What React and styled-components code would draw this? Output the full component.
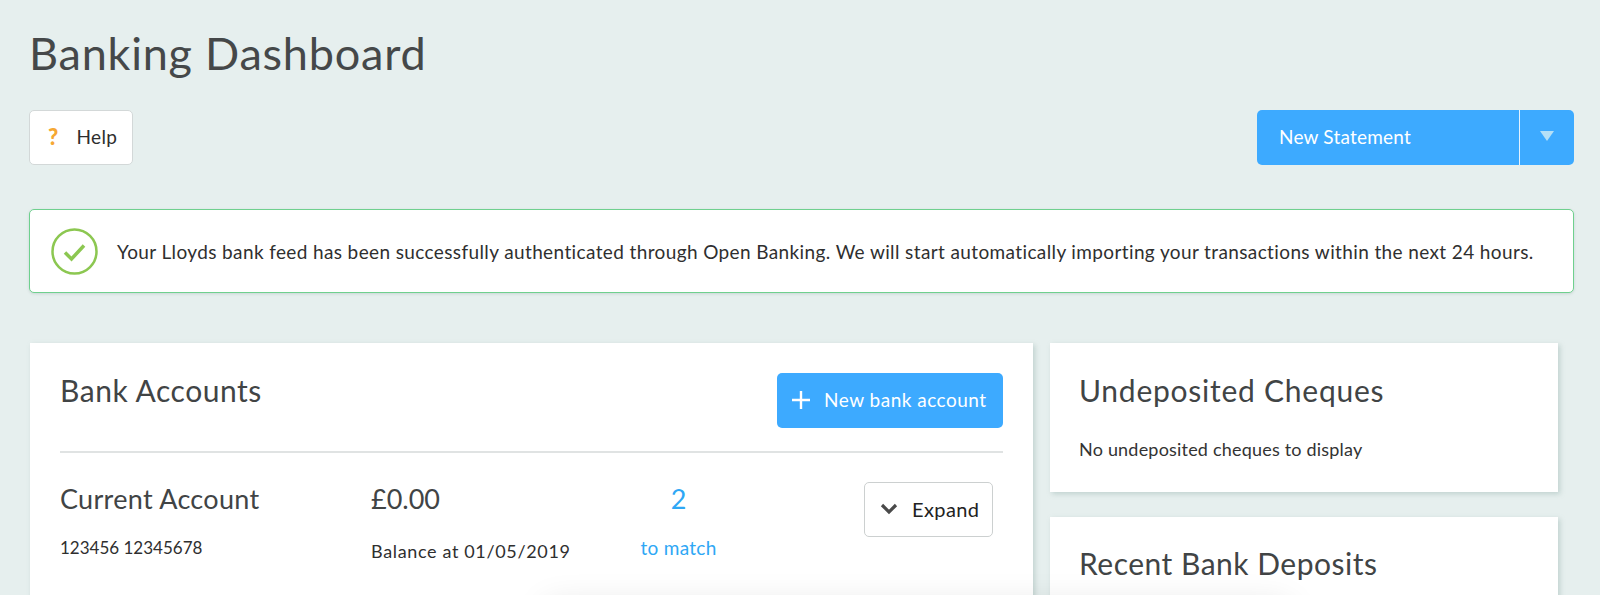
import React from "react";
import styled, { createGlobalStyle } from "styled-components";

const Global = createGlobalStyle`
  html, body { margin: 0; padding: 0; height: 595px; overflow: hidden; background: #e6efee; }
  body { font-family: Lato, "Open Sans", sans-serif; color: #333; }
  * { box-sizing: border-box; }
`;

const Page = styled.div`
  position: relative;
  height: 595px;
  overflow: hidden;
  padding: 24px 26px 0 30px;
  background: #e6efee;
`;

const Title = styled.h1`
  margin: 0;
  height: 58px;
  font-size: 45px;
  line-height: 58px;
  font-weight: 400;
  letter-spacing: 0.77px;
  margin-left: -1px;
  color: #454849;
`;

const Toolbar = styled.div`
  display: flex;
  justify-content: space-between;
  margin-top: 28px;
`;

const HelpButton = styled.button`
  display: flex;
  align-items: center;
  gap: 18px;
  width: 104px;
  height: 55px;
  padding: 0 0 2px 18px;
  margin-left: -1px;
  border: 1px solid #d3d8d8;
  border-radius: 5px;
  background: #fff;
  font: 400 19px Lato, sans-serif;
  letter-spacing: 0.3px;
  color: #2d2d2d;
`;

const HelpMark = styled.span`
  font: 900 22px Lato, sans-serif;
  color: #f6a834;
`;

const SplitButton = styled.div`
  display: flex;
  width: 317px;
  height: 55px;
  border-radius: 5px;
  background: #3daaff;
  color: #fff;
  overflow: hidden;
`;

const SplitLabel = styled.div`
  flex: 1;
  padding-left: 22px;
  font-size: 19px;
  letter-spacing: 0.2px;
  line-height: 53px;
`;

const SplitCaret = styled.div`
  display: flex;
  justify-content: center;
  width: 55px;
  padding-top: 20px;
  border-left: 1px solid #e3f2ff;
`;

const Alert = styled.div`
  display: flex;
  align-items: center;
  gap: 19px;
  height: 84px;
  margin: 44px 0 0 -1px;
  padding-left: 21px;
  border: 1px solid #6fd08e;
  border-radius: 5px;
  background: #fff;
  box-shadow: 0 1px 3px rgba(90, 120, 115, 0.2);
  font-size: 19px;
  letter-spacing: 0.38px;
  white-space: nowrap;
  color: #2f2f2f;
`;

const Columns = styled.div`
  display: grid;
  grid-template-columns: 1003px 508px;
  gap: 17px;
  margin-top: 50px;
`;

const Side = styled.div`
  display: flex;
  flex-direction: column;
  gap: 25px;
`;

const Card = styled.section`
  background: #fff;
  box-shadow: 2px 2px 5px rgba(120, 155, 150, 0.35);
  padding: ${(p) => p.$padding};
  height: ${(p) => p.$height};
`;

const CardHead = styled.div`
  display: flex;
  justify-content: space-between;
  height: 81px;
  border-bottom: 2px solid #e0e3e3;
`;

const CardTitle = styled.h2`
  margin: -2px 0 0;
  font-size: 30px;
  line-height: 40px;
  font-weight: 400;
  letter-spacing: ${(p) => p.$spacing};
  color: #414445;
`;

const PrimaryButton = styled.button`
  display: flex;
  align-items: center;
  gap: 14px;
  width: 226px;
  height: 55px;
  margin-top: 1px;
  padding: 0 0 2px 15px;
  border: 0;
  border-radius: 5px;
  background: #3daaff;
  color: #fff;
  font: 400 19px Lato, sans-serif;
  letter-spacing: 0.5px;
`;

const AccountRow = styled.div`
  display: grid;
  grid-template-columns: 311px 207px 201px 1fr;
  padding-top: 28px;
`;

const Name = styled.div`
  font-size: 27px;
  line-height: 36px;
  letter-spacing: ${(p) => p.$spacing || "0"};
  color: #414445;
`;

const AccountNumber = styled.div`
  margin-top: 19px;
  font-size: 17px;
  line-height: 24px;
  color: #2f2f2f;
`;

const BalanceDate = styled.div`
  margin-top: 22px;
  font-size: 18px;
  line-height: 24px;
  letter-spacing: 0.65px;
  color: #2f2f2f;
`;

const MatchCell = styled.div`
  text-align: center;
  color: #2ea7f5;
`;

const MatchCount = styled.div`
  font-size: 27px;
  line-height: 36px;
`;

const MatchLabel = styled.div`
  margin-top: 19px;
  font-size: 19px;
  line-height: 24px;
  letter-spacing: 0.3px;
`;

const ExpandButton = styled.button`
  display: flex;
  align-items: center;
  gap: 14px;
  justify-self: end;
  width: 129px;
  height: 55px;
  margin: 1px 10px 0 0;
  padding: 0 0 2px 15px;
  border: 1px solid #ccd0d0;
  border-radius: 5px;
  background: #fff;
  font: 400 20px Lato, sans-serif;
  letter-spacing: 0.4px;
  color: #222;
`;

const BottomShadow = styled.div`
  position: absolute;
  left: 545px;
  top: 604px;
  width: 745px;
  height: 40px;
  box-shadow: 0 0 34px rgba(0, 0, 0, 0.11);
`;

const Plain = styled.p`
  margin: 27px 0 0;
  font-size: 18px;
  line-height: 24px;
  letter-spacing: 0.2px;
  color: #333;
`;

export default function App() {
  return (
    <Page>
      <Global />
      <Title>Banking Dashboard</Title>
      <Toolbar>
        <HelpButton><HelpMark>?</HelpMark>Help</HelpButton>
        <SplitButton>
          <SplitLabel>New Statement</SplitLabel>
          <SplitCaret>
            <svg width="16" height="12" viewBox="0 0 16 12"><path d="M1 1h14L8 11z" fill="#b5e0f7" /></svg>
          </SplitCaret>
        </SplitButton>
      </Toolbar>
      <Alert>
        <svg width="47" height="47" viewBox="0 0 47 47" fill="none">
          <circle cx="23.5" cy="23.5" r="22" stroke="#8cc751" strokeWidth="2.5" />
          <path d="M14 24.5l6.5 6.5L33 17.5" stroke="#8cc751" strokeWidth="3.5" />
        </svg>
        Your Lloyds bank feed has been successfully authenticated through Open Banking. We will start automatically importing your transactions within the next 24 hours.
      </Alert>
      <Columns>
        <Card $padding="29px 30px 0 30px" $height="261px">
          <CardHead>
            <CardTitle $spacing="0.55px">Bank Accounts</CardTitle>
            <PrimaryButton>
              <svg width="18" height="18" viewBox="0 0 18 18"><path d="M9 0v18M0 9h18" stroke="#fff" strokeWidth="2.4" /></svg>
              New bank account
            </PrimaryButton>
          </CardHead>
          <AccountRow>
            <div><Name $spacing="0.3px">Current Account</Name><AccountNumber>123456 12345678</AccountNumber></div>
            <div><Name>£0.00</Name><BalanceDate>Balance at 01/05/2019</BalanceDate></div>
            <MatchCell><MatchCount>2</MatchCount><MatchLabel>to match</MatchLabel></MatchCell>
            <ExpandButton>
              <svg width="18" height="12" viewBox="0 0 18 12" fill="none"><path d="M2 2l7 7 7-7" stroke="#4a4a4a" strokeWidth="3.2" /></svg>
              Expand
            </ExpandButton>
          </AccountRow>
        </Card>
        <Side>
          <Card $padding="29px 28px 0 29px" $height="149px">
            <CardTitle $spacing="0.75px">Undeposited Cheques</CardTitle>
            <Plain>No undeposited cheques to display</Plain>
          </Card>
          <Card $padding="28px 28px 0 29px" $height="120px">
            <CardTitle $spacing="0.5px">Recent Bank Deposits</CardTitle>
          </Card>
        </Side>
      </Columns>
      <BottomShadow />
    </Page>
  );
}
